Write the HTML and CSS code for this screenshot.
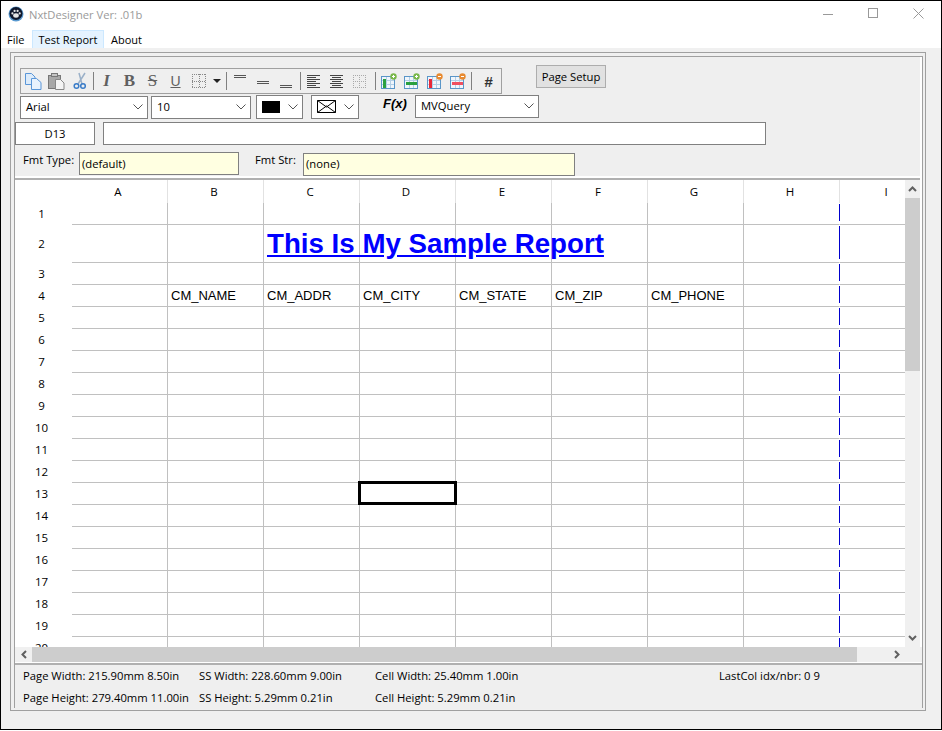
FILE: index.html
```html
<!DOCTYPE html>
<html>

<head>
	<meta charset="utf-8">
	<title>NxtDesigner Ver: .01b</title>
	<link rel="stylesheet" href="styles.css">
</head>

<body>
	<div class="window">
		<div class="titlebar">
			<svg class="appicon" width="16" height="16" viewBox="0 0 16 16">
				<circle cx="8" cy="8" r="7.5" fill="#5a9ad0"/>
				<circle cx="8" cy="7.5" r="6.5" fill="#10182c"/>
				<ellipse cx="8" cy="9.5" rx="2.8" ry="2.2" fill="#e8e8e8"/>
				<circle cx="4.4" cy="7.4" r="1.1" fill="#e8e8e8"/>
				<circle cx="6.6" cy="4.9" r="1.1" fill="#e8e8e8"/>
				<circle cx="9.6" cy="4.9" r="1.1" fill="#e8e8e8"/>
				<circle cx="11.7" cy="7.4" r="1.1" fill="#e8e8e8"/>
			</svg>
			<span class="apptitle">NxtDesigner Ver: .01b</span>
			<div class="winbtns">
				<svg width="10" height="10" viewBox="0 0 10 10"><path d="M0 6.5H10" stroke="#999" fill="none"/></svg>
				<svg width="10" height="10" viewBox="0 0 10 10"><rect x=".5" y=".5" width="9" height="9" stroke="#999" fill="none"/></svg>
				<svg width="11" height="11" viewBox="0 0 11 11"><path d="M.5 .5L10.5 10.5M10.5 .5L.5 10.5" stroke="#999" fill="none"/></svg>
			</div>
		</div>
		<div class="menubar">
			<span class="menuitem menu-file">File</span>
			<span class="menuitem active">Test Report</span>
			<span class="menuitem">About</span>
		</div>

		<div class="workspace">
			<div class="frame-outer">
				<div class="frame-inner">
					<div class="panel">
						<div class="row row-tools">
							<div class="toolbar">
								<span class="tool">
									<svg width="17" height="17" viewBox="0 0 17 17">
										<path d="M.5 .5H6.5L10 4V11.5H.5Z" fill="#dcebfa" stroke="#5a96d8"/>
										<path d="M6.5 5.5H11.5L16 9.5V16.5H6.5Z" fill="#e8f2fd" stroke="#5a96d8"/>
									</svg>
								</span>
								<span class="tool">
									<svg width="17" height="17" viewBox="0 0 17 17">
										<rect x=".5" y="2.5" width="12" height="13" fill="#a8a8a8" stroke="#777"/>
										<rect x="3.5" y=".5" width="6" height="3" fill="#c4c4c4" stroke="#777"/>
										<path d="M7.5 6.5H12.5L16 10V16.5H7.5Z" fill="#f4f4f4" stroke="#888"/>
									</svg>
								</span>
								<span class="tool">
									<svg width="14" height="18" viewBox="0 0 14 18">
										<path d="M12 1L5 12M6 1L9 12" stroke="#9ab0c8" stroke-width="1.5" fill="none"/>
										<circle cx="3.5" cy="14" r="2.3" fill="none" stroke="#3a7cc8" stroke-width="1.5"/>
										<circle cx="10" cy="14" r="2.3" fill="none" stroke="#3a7cc8" stroke-width="1.5"/>
									</svg>
								</span>
								<span class="sep"></span>
								<span class="tool glyph glyph-i">I</span>
								<span class="tool glyph glyph-b">B</span>
								<span class="tool glyph glyph-s">S</span>
								<span class="tool glyph glyph-u">U</span>
								<span class="tool">
									<svg width="14" height="14" viewBox="0 0 14 14" shape-rendering="crispEdges">
										<path d="M0 .5H14M0 7.5H14M0 13.5H14M.5 0V14M7.5 0V14M13.5 0V14" fill="none" stroke="#888" stroke-dasharray="1 1"/>
									</svg>
								</span>
								<span class="tool tool-arrow">
									<svg width="8" height="4" viewBox="0 0 8 4"><path d="M0 0H8L4 4Z" fill="#222"/></svg>
								</span>
								<span class="sep sep-b"></span>
								<span class="tool">
									<svg width="13" height="14" viewBox="0 0 13 14" shape-rendering="crispEdges"><path d="M0 1.5H12M0 3.5H12" stroke="#555" fill="none"/></svg>
								</span>
								<span class="tool">
									<svg width="13" height="14" viewBox="0 0 13 14" shape-rendering="crispEdges"><path d="M0 7.5H12M0 9.5H12" stroke="#555" fill="none"/></svg>
								</span>
								<span class="tool">
									<svg width="13" height="14" viewBox="0 0 13 14" shape-rendering="crispEdges"><path d="M0 11.5H12M0 13.5H12" stroke="#555" fill="none"/></svg>
								</span>
								<span class="sep"></span>
								<span class="tool">
									<svg width="13" height="13" viewBox="0 0 13 13" shape-rendering="crispEdges"><path d="M0 .5H13M0 2.5H9M0 4.5H13M0 6.5H9M0 8.5H13M0 10.5H9M0 12.5H13" stroke="#444" fill="none"/></svg>
								</span>
								<span class="tool">
									<svg width="13" height="13" viewBox="0 0 13 13" shape-rendering="crispEdges"><path d="M0 .5H13M2 2.5H11M0 4.5H13M2 6.5H11M0 8.5H13M2 10.5H11M0 12.5H13" stroke="#444" fill="none"/></svg>
								</span>
								<span class="tool">
									<svg width="13" height="13" viewBox="0 0 13 13" shape-rendering="crispEdges"><path d="M0 .5H13M0 6.5H13M0 12.5H13M.5 0V13M6.5 0V13M12.5 0V13" fill="none" stroke="#aaa" stroke-dasharray="1 1"/></svg>
								</span>
								<span class="sep sep-c"></span>
								<span class="tool">
									<svg width="16" height="16" viewBox="0 0 16 16" shape-rendering="crispEdges">
										<rect x=".5" y="3.5" width="13" height="12" fill="#f0f6fc" stroke="#5a96c8"/>
										<path d="M1 7.5H13M1 11.5H13M5.5 4V15M9.5 4V15" stroke="#b4cfe6" fill="none"/>
										<rect x="2" y="6" width="3" height="9" fill="#2aa040"/>
										<circle cx="12.5" cy="3.5" r="3.2" fill="#7ab84a" shape-rendering="auto"/>
										<path d="M11 3.5H14M12.5 2V5" stroke="#fff" fill="none"/>
									</svg>
								</span>
								<span class="tool">
									<svg width="16" height="16" viewBox="0 0 16 16" shape-rendering="crispEdges">
										<rect x=".5" y="3.5" width="13" height="12" fill="#f0f6fc" stroke="#5a96c8"/>
										<path d="M1 7.5H13M5.5 4V15M9.5 4V15" stroke="#b4cfe6" fill="none"/>
										<rect x="2" y="9" width="11" height="3" fill="#2aa040"/>
										<circle cx="12.5" cy="3.5" r="3.2" fill="#7ab84a" shape-rendering="auto"/>
										<path d="M11 3.5H14M12.5 2V5" stroke="#fff" fill="none"/>
									</svg>
								</span>
								<span class="tool">
									<svg width="16" height="16" viewBox="0 0 16 16" shape-rendering="crispEdges">
										<rect x=".5" y="3.5" width="13" height="12" fill="#f0f6fc" stroke="#5a96c8"/>
										<path d="M1 7.5H13M1 11.5H13M5.5 4V15M9.5 4V15" stroke="#b4cfe6" fill="none"/>
										<rect x="2" y="6" width="3" height="9" fill="#e82838"/>
										<circle cx="12.5" cy="3.5" r="3.2" fill="#e88a30" shape-rendering="auto"/>
										<path d="M11 3.5H14" stroke="#fff" fill="none"/>
									</svg>
								</span>
								<span class="tool">
									<svg width="16" height="16" viewBox="0 0 16 16" shape-rendering="crispEdges">
										<rect x=".5" y="3.5" width="13" height="12" fill="#f0f6fc" stroke="#5a96c8"/>
										<path d="M1 7.5H13M5.5 4V15M9.5 4V15" stroke="#b4cfe6" fill="none"/>
										<rect x="2" y="9" width="11" height="3" fill="#f05060"/>
										<circle cx="12.5" cy="3.5" r="3.2" fill="#e88a30" shape-rendering="auto"/>
										<path d="M11 3.5H14" stroke="#fff" fill="none"/>
									</svg>
								</span>
								<span class="sep sep-d"></span>
								<span class="tool glyph glyph-hash">#</span>
							</div>
							<div class="btn">Page Setup</div>
						</div>

						<div class="row row-combos">
							<div class="combo combo-font">Arial<svg class="chev" width="10" height="6" viewBox="0 0 10 6"><path d="M.5 .5L5 5L9.5 .5" fill="none" stroke="#555"/></svg></div>
							<div class="combo combo-size">10<svg class="chev" width="10" height="6" viewBox="0 0 10 6"><path d="M.5 .5L5 5L9.5 .5" fill="none" stroke="#555"/></svg></div>
							<div class="combo combo-color"><span class="swatch"></span><svg class="chev" width="10" height="6" viewBox="0 0 10 6"><path d="M.5 .5L5 5L9.5 .5" fill="none" stroke="#555"/></svg></div>
							<div class="combo combo-border">
								<svg width="19" height="13" viewBox="0 0 19 13"><path d="M.5 .5H18.5V12.5H.5ZM.5 .5L9.5 7L18.5 .5M.5 12.5L9.5 6L18.5 12.5" fill="#fff" stroke="#000"/></svg>
								<svg class="chev" width="10" height="6" viewBox="0 0 10 6"><path d="M.5 .5L5 5L9.5 .5" fill="none" stroke="#555"/></svg>
							</div>
							<span class="fx">F(x)</span>
							<div class="combo combo-query">MVQuery<svg class="chev" width="10" height="6" viewBox="0 0 10 6"><path d="M.5 .5L5 5L9.5 .5" fill="none" stroke="#555"/></svg></div>
						</div>

						<div class="row row-cell">
							<div class="field field-ref">D13</div>
							<div class="field field-formula"></div>
						</div>

						<div class="row row-fmt">
							<span class="fmt-label">Fmt Type:</span>
							<div class="fmt-box fmt-type">(default)</div>
							<span class="fmt-label fmt-label2">Fmt Str:</span>
							<div class="fmt-box fmt-str">(none)</div>
						</div>
					</div>

					<div class="sheetwrap">
						<div class="sheetview">
							<table class="sheet">
								<tr class="head"><th></th><th>A</th><th>B</th><th>C</th><th>D</th><th>E</th><th>F</th><th>G</th><th>H</th><th>I</th></tr>
								<tr><th>1</th><td></td><td></td><td></td><td></td><td></td><td></td><td></td><td class="brk"></td><td></td></tr>
								<tr class="tall"><th>2</th><td></td><td></td><td class="title-cell">This Is My Sample Report</td><td></td><td></td><td></td><td></td><td class="brk"></td><td></td></tr>
								<tr><th>3</th><td></td><td></td><td></td><td></td><td></td><td></td><td></td><td class="brk"></td><td></td></tr>
								<tr><th>4</th><td></td><td>CM_NAME</td><td>CM_ADDR</td><td>CM_CITY</td><td>CM_STATE</td><td>CM_ZIP</td><td>CM_PHONE</td><td class="brk"></td><td></td></tr>
								<tr><th>5</th><td></td><td></td><td></td><td></td><td></td><td></td><td></td><td class="brk"></td><td></td></tr>
								<tr><th>6</th><td></td><td></td><td></td><td></td><td></td><td></td><td></td><td class="brk"></td><td></td></tr>
								<tr><th>7</th><td></td><td></td><td></td><td></td><td></td><td></td><td></td><td class="brk"></td><td></td></tr>
								<tr><th>8</th><td></td><td></td><td></td><td></td><td></td><td></td><td></td><td class="brk"></td><td></td></tr>
								<tr><th>9</th><td></td><td></td><td></td><td></td><td></td><td></td><td></td><td class="brk"></td><td></td></tr>
								<tr><th>10</th><td></td><td></td><td></td><td></td><td></td><td></td><td></td><td class="brk"></td><td></td></tr>
								<tr><th>11</th><td></td><td></td><td></td><td></td><td></td><td></td><td></td><td class="brk"></td><td></td></tr>
								<tr><th>12</th><td></td><td></td><td></td><td></td><td></td><td></td><td></td><td class="brk"></td><td></td></tr>
								<tr><th>13</th><td></td><td></td><td></td><td class="selected"></td><td></td><td></td><td></td><td class="brk"></td><td></td></tr>
								<tr><th>14</th><td></td><td></td><td></td><td></td><td></td><td></td><td></td><td class="brk"></td><td></td></tr>
								<tr><th>15</th><td></td><td></td><td></td><td></td><td></td><td></td><td></td><td class="brk"></td><td></td></tr>
								<tr><th>16</th><td></td><td></td><td></td><td></td><td></td><td></td><td></td><td class="brk"></td><td></td></tr>
								<tr><th>17</th><td></td><td></td><td></td><td></td><td></td><td></td><td></td><td class="brk"></td><td></td></tr>
								<tr><th>18</th><td></td><td></td><td></td><td></td><td></td><td></td><td></td><td class="brk"></td><td></td></tr>
								<tr><th>19</th><td></td><td></td><td></td><td></td><td></td><td></td><td></td><td class="brk"></td><td></td></tr>
								<tr><th>20</th><td></td><td></td><td></td><td></td><td></td><td></td><td></td><td class="brk"></td><td></td></tr>
							</table>
						</div>
						<div class="vscroll">
							<span class="sb-btn"><svg width="9" height="6" viewBox="0 0 9 6"><path d="M1 5L4.5 1.5L8 5" fill="none" stroke="#606060" stroke-width="2"/></svg></span>
							<div class="vtrack"><div class="vthumb"></div></div>
							<span class="sb-btn"><svg width="9" height="6" viewBox="0 0 9 6"><path d="M1 1L4.5 4.5L8 1" fill="none" stroke="#606060" stroke-width="2"/></svg></span>
						</div>
					</div>
					<div class="hscroll">
						<span class="sb-btn"><svg width="6" height="9" viewBox="0 0 6 9"><path d="M5 1L1.5 4.5L5 8" fill="none" stroke="#606060" stroke-width="2"/></svg></span>
						<div class="hthumb"></div>
						<span class="sb-btn hright"><svg width="6" height="9" viewBox="0 0 6 9"><path d="M1 1L4.5 4.5L1 8" fill="none" stroke="#606060" stroke-width="2"/></svg></span>
					</div>

					<div class="status">
						<span>Page Width: 215.90mm 8.50in</span>
						<span>SS Width: 228.60mm 9.00in</span>
						<span>Cell Width: 25.40mm 1.00in</span>
						<span>LastCol idx/nbr: 0 9</span>
						<span>Page Height: 279.40mm 11.00in</span>
						<span>SS Height: 5.29mm 0.21in</span>
						<span>Cell Height: 5.29mm 0.21in</span>
						<span></span>
					</div>
				</div>
			</div>
		</div>
	</div>
</body>

</html>
```

FILE: styles.css
```css
* {
	box-sizing: border-box;
}

body {
	margin: 0;
	background-color: #FFFFFF;
	color: #000000;
	font-family: "Open Sans", "Noto Sans", sans-serif;
	font-size: 11.25px;
}

.window {
	width: 942px;
	height: 730px;
	border: 1px solid #000000;
	display: flex;
	flex-direction: column;
}

/* title and menu */
.titlebar {
	height: 29px;
	flex: none;
	display: flex;
	align-items: center;
	padding-left: 7px;
	background-color: #FFFFFF;
}

.appicon {
	margin-top: -3px;
}

.apptitle {
	margin-left: 5px;
	margin-top: -3px;
	color: #9a9a9a;
	font-size: 11.2px;
}

.winbtns {
	margin-left: auto;
	display: flex;
	align-items: center;
	gap: 35px;
	padding-right: 17px;
	margin-top: -5px;
}

.menubar {
	height: 18px;
	flex: none;
	display: flex;
	background-color: #FFFFFF;
}

.menuitem {
	padding: 0 6px;
	line-height: 17px;
	font-size: 11px;
	white-space: nowrap;
	border: 1px solid transparent;
}

.menu-file {
	width: 31px;
	padding-left: 5px;
}

.menuitem.active {
	width: 72px;
	height: 19px;
	padding: 0;
	text-align: center;
	background-color: #E5F3FF;
	border-color: #CCE8FF;
}

/* frames */
.workspace {
	flex: 1;
	min-height: 0;
	padding: 4px 15px 18px 9px;
	background-color: #F0F0F0;
}

.frame-outer {
	height: 100%;
	border: 1px solid #A0A0A0;
	padding: 3px 2px 2px 3px;
}

.frame-inner {
	height: 100%;
	border: 1px solid #A0A0A0;
	background-color: #FFFFFF;
	display: flex;
	flex-direction: column;
}

/* tools panel */
.panel {
	height: 119px;
	flex: none;
	margin-right: 2px;
	padding-top: 8px;
	background-color: #EFEFEF;
}

.row {
	display: flex;
}

.row-tools {
	height: 29px;
	padding-left: 5px;
	align-items: flex-start;
}

.toolbar {
	width: 482px;
	height: 26px;
	margin-top: 3px;
	border: 1px solid #A0A0A0;
	padding-left: 1px;
	display: flex;
	align-items: center;
}

.tool {
	width: 23px;
	height: 22px;
	flex: none;
	display: flex;
	align-items: center;
	justify-content: center;
}

.tool-arrow {
	width: 14px;
}

.sep {
	width: 1px;
	height: 18px;
	flex: none;
	background-color: #808080;
	margin: 0 1px 0 2px;
}

.sep-b {
	margin: 0 2px 0 2px;
}

.sep-c {
	margin: 0 1px 0 4px;
}

.sep-d {
	margin: 0 5px 0 2px;
}

.glyph {
	font-family: "Liberation Serif", serif;
	font-size: 17px;
	font-weight: bold;
	color: #606060;
}

.glyph-i {
	font-style: italic;
}

.glyph-s {
	text-decoration: line-through;
	font-weight: normal;
}

.glyph-u {
	font-family: "Liberation Sans", sans-serif;
	font-size: 14px;
	font-weight: normal;
	text-decoration: underline;
}

.glyph-hash {
	font-family: "Liberation Sans", sans-serif;
	font-style: italic;
	font-size: 15px;
	color: #333333;
}

.btn {
	width: 70px;
	height: 23px;
	margin-left: 34px;
	border: 1px solid #ADADAD;
	background-color: #E1E1E1;
	text-align: center;
	line-height: 21px;
}

.row-combos {
	height: 24px;
	margin-top: 1px;
	padding-left: 5px;
	align-items: center;
}

.combo {
	height: 23px;
	flex: none;
	border: 1px solid #808080;
	background-color: #FFFFFF;
	display: flex;
	align-items: center;
	padding-left: 5px;
	padding-bottom: 1px;
}

.chev {
	margin-left: auto;
	margin-right: 4px;
	margin-top: 1px;
}

.combo-font {
	width: 128px;
}

.combo-size {
	width: 100px;
	margin-left: 3px;
}

.combo-color {
	width: 47px;
	height: 24px;
	margin-left: 5px;
}

.swatch {
	width: 18px;
	height: 12px;
	background-color: #000000;
}

.combo-border {
	width: 48px;
	height: 24px;
	margin-left: 8px;
}

.fx {
	width: 56px;
	padding-left: 24px;
	font-family: "Liberation Sans", sans-serif;
	font-weight: bold;
	font-style: italic;
	font-size: 13px;
	margin-top: -7px;
}

.combo-query {
	width: 124px;
	margin-top: -1px;
	padding-bottom: 2px;
}

.row-cell {
	height: 23px;
	margin-top: 3px;
}

.field {
	height: 23px;
	border: 1px solid #808080;
	background-color: #FFFFFF;
}

.field-ref {
	width: 80px;
	text-align: center;
	line-height: 21px;
}

.field-formula {
	width: 663px;
	margin-left: 8px;
}

.row-fmt {
	margin-top: 7px;
	padding-left: 8px;
}

.fmt-label {
	width: 56px;
	margin-top: 0;
}

.fmt-label2 {
	width: 48px;
	margin-left: 16px;
}

.fmt-box {
	height: 23px;
	border: 1px solid #808080;
	background-color: #FFFFE1;
	padding-left: 2px;
	line-height: 21px;
}

.fmt-type {
	width: 160px;
}

.fmt-str {
	width: 272px;
	margin-top: 1px;
	line-height: 20px;
}

/* spreadsheet */
.sheetwrap {
	height: 469px;
	flex: none;
	margin-top: 2px;
	margin-right: 2px;
	border-top: 2px solid #B0B0B0;
	display: flex;
}

.sheetview {
	width: 890px;
	overflow: hidden;
	background-color: #FFFFFF;
}

.sheet {
	width: 921px;
	table-layout: fixed;
	border-spacing: 0;
	font-family: "Liberation Sans", sans-serif;
	font-size: 13px;
}

.sheet th {
	font-family: "Open Sans", "Noto Sans", sans-serif;
	font-size: 11.5px;
	font-weight: normal;
	padding: 0 4px 2px 0;
	width: 96px;
}

.sheet th:first-child {
	width: 57px;
}

.sheet tr {
	height: 22px;
}

.sheet .tall {
	height: 38px;
}

.sheet .head {
	height: 23px;
}

.sheet .head th {
	padding: 0 3px 0 0;
	border-right: 1px solid #E2E2E2;
}

.sheet .head th:first-child {
	border-right: none;
}

.sheet td {
	padding: 0 0 1px 3px;
	border-right: 1px solid #C0C0C0;
	border-bottom: 1px solid #C0C0C0;
	white-space: nowrap;
}

.sheet .brk {
	border-right-color: transparent;
	background-image: linear-gradient(#0000CC, #0000CC);
	background-origin: border-box;
	background-clip: border-box;
	background-repeat: no-repeat;
	background-position: right 0 top 1px;
	background-size: 1px calc(100% - 5px);
}

.sheet .title-cell {
	padding: 1px 0 0 3px;
	font-size: 27.7px;
	font-weight: bold;
	color: #0000FF;
	text-decoration: underline;
}

.sheet .selected {
	position: relative;
}

.sheet .selected::after {
	content: "";
	position: absolute;
	top: -2px;
	right: -2px;
	bottom: -1px;
	left: -2px;
	border: 3px solid #000000;
}

/* scroll bars */
.vscroll {
	width: 15px;
	flex: none;
	display: flex;
	flex-direction: column;
	background-color: #F0F0F0;
}

.sb-btn {
	flex: none;
	display: flex;
	align-items: center;
	justify-content: center;
}

.vscroll .sb-btn {
	height: 18px;
}

.vtrack {
	flex: 1;
}

.vthumb {
	height: 173px;
	background-color: #CDCDCD;
}

.hscroll {
	height: 15px;
	flex: none;
	display: flex;
	background-color: #F0F0F0;
}

.hscroll .sb-btn {
	width: 17px;
}

.hthumb {
	width: 825px;
	background-color: #CDCDCD;
}

.hscroll .hright {
	margin-left: 31px;
}

/* status */
.status {
	flex: 1;
	margin-top: 1px;
	border-top: 2px solid #B0B0B0;
	background-color: #EFEFEF;
	padding-left: 8px;
	display: grid;
	grid-template-columns: 176px 176px 344px auto;
	grid-auto-rows: 22px;
	line-height: 22px;
}
```
